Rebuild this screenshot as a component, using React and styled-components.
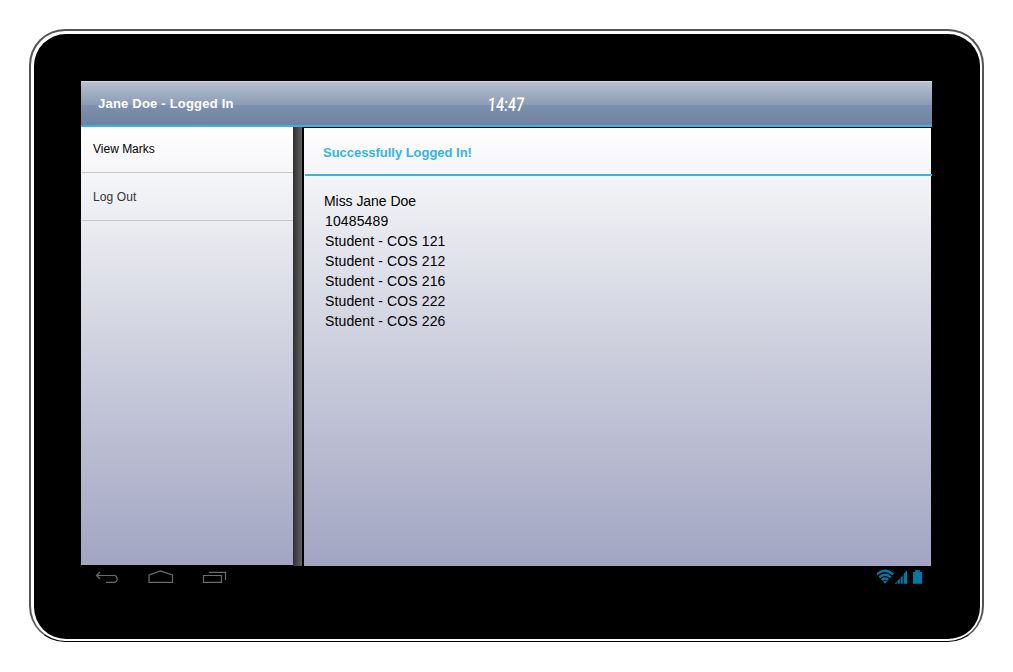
import React from "react";
import styled, { createGlobalStyle } from "styled-components";

const GlobalStyle = createGlobalStyle`
  * { box-sizing: border-box; }
  html, body { margin: 0; background: #fff; }
  body { font-family: "Liberation Sans", Arial, sans-serif; color: #000; overflow: hidden; }
`;

const Page = styled.div`
  width: 1013px;
  height: 672px;
  padding: 29px 29px 30px 29px;
`;

const Tablet = styled.div`
  width: 955px;
  height: 613px;
  padding: 3px 2px 2px 3px;
  border: 2px solid #555;
  border-bottom: 1px solid #000;
  border-radius: 36px;
  background: #fff;
`;

const Bezel = styled.div`
  width: 946px;
  height: 605px;
  padding: 47px 47px 0 47px;
  border-radius: 32px;
  background: #000;
`;

const Screen = styled.div`
  width: 852px;
  display: flex;
  flex-direction: column;
`;

const Header = styled.header`
  display: grid;
  grid-template-columns: 1fr auto 1fr;
  align-items: center;
  width: 851px;
  height: 46px;
  padding: 0 16px 0 17px;
  border-top: 1px solid #d5dbe0;
  border-bottom: 2px solid #33b5e5;
  background: linear-gradient(#b5c0cf 0%, #8c9cb5 53%, #7b90af 54%, #71829f 100%);
`;

const UserStatus = styled.div`
  font-size: 13px;
  font-weight: bold;
  line-height: 16px;
  letter-spacing: 0.21px;
  color: #fff;
`;

const Clock = styled.time`
  width: 36px;
  font-family: Roboto, sans-serif;
  font-size: 19px;
  font-weight: 500;
  line-height: 20px;
  color: #fff;
  white-space: nowrap;
  transform: translate(-1px, 1px) scaleX(0.75) skewX(-5deg);
  transform-origin: left center;
`;

const Content = styled.div`
  display: flex;
  height: 439px;
`;

const Sidebar = styled.nav`
  width: 212px;
  height: 438px;
  background: linear-gradient(#ffffff 0%, #ebecf1 22%, #cfd1df 50%, #a1a5c2 100%);
`;

const NavItem = styled.a`
  display: block;
  height: ${(p) => (p.$active ? "46px" : "48px")};
  padding: ${(p) => (p.$active ? "14px" : "16px")} 12px 0;
  border-bottom: 1px solid #c6c7cb;
  font-size: 12px;
  line-height: 16px;
  letter-spacing: ${(p) => (p.$active ? "0" : "0.12px")};
  color: ${(p) => (p.$active ? "#000" : "#333")};
`;

const Divider = styled.div`
  width: 9px;
  background: linear-gradient(90deg, #303030, #626262);
`;

const Main = styled.main`
  width: 627px;
  height: 438px;
  margin: 1px 0 0 2px;
  background: linear-gradient(#ffffff 0%, #ebecf1 20%, #cfd1df 48%, #a1a5c2 100%);
`;

const Title = styled.h1`
  width: 627px;
  height: 48px;
  margin: 0 0 0 1px;
  padding: 17px 18px 0;
  border-bottom: 2px solid #33b5e5;
  font-size: 13px;
  line-height: 16px;
  letter-spacing: -0.03px;
  color: #33b5e5;
`;

const Details = styled.ul`
  margin: 0;
  padding: 15px 0 0 21px;
  list-style: none;
  font-size: 14px;
  line-height: 20px;
`;

const Detail = styled.li`
  height: 20px;
  letter-spacing: 0.13px;

  &:first-child {
    margin-left: -1px;
    letter-spacing: -0.05px;
  }
`;

const SystemBar = styled.footer`
  display: flex;
  justify-content: space-between;
  height: 30px;
  padding: 3px 9px 0 14px;
`;

const NavButtons = styled.svg`
  width: 132px;
  height: 16px;
`;

const StatusIcons = styled.svg`
  width: 47px;
  height: 16px;
`;

const courses = ["COS 121", "COS 212", "COS 216", "COS 222", "COS 226"];

export default function App() {
  return (
    <>
      <GlobalStyle />
      <Page>
        <Tablet>
          <Bezel>
            <Screen>
              <Header>
                <UserStatus>Jane Doe - Logged In</UserStatus>
                <Clock>14:47</Clock>
              </Header>
              <Content>
                <Sidebar>
                  <NavItem $active>View Marks</NavItem>
                  <NavItem>Log Out</NavItem>
                </Sidebar>
                <Divider />
                <Main>
                  <Title>Successfully Logged In!</Title>
                  <Details>
                    <Detail>Miss Jane Doe</Detail>
                    <Detail>10485489</Detail>
                    {courses.map((c) => (
                      <Detail key={c}>Student - {c}</Detail>
                    ))}
                  </Details>
                </Main>
              </Content>
              <SystemBar>
                <NavButtons viewBox="0 0 132 16" fill="none" stroke="#6b6b6b" strokeWidth="1.2">
                  <path d="M5 3 L1.5 6.5 L5 10 M1.5 6.5 H18.5 A3 3 0 0 1 22 9.5 A3 3 0 0 1 18.5 13.3 H11" />
                  <path d="M54 13.3 V6 L65.5 2 L77.5 6 V13.3 Z" />
                  <path d="M108.5 6.5 H126.5 V13.3 H108.5 Z M114 3.3 H130.5 V11" />
                </NavButtons>
                <StatusIcons viewBox="1 0 47 16" fill="#0079a6">
                  <g fill="none" stroke="#0079a6" strokeWidth="2.4">
                    <path d="M0.8 5.4 Q9 -1.8 17.2 5.4" />
                    <path d="M3.3 8.3 Q9 3.2 14.7 8.3" />
                    <path d="M5.8 11.1 Q9 8 12.2 11.1" />
                  </g>
                  <path d="M7 12.6 Q9 11 11 12.6 L9 14.7 Z" />
                  <path d="M18.5 14.7 L20.8 12.4 V14.7 Z M21.5 11.8 L23.8 9.5 V14.7 H21.5 Z M24.6 8.8 L26.8 6.2 V14.7 H24.6 Z M27.7 5 L31 1.2 V14.7 H27.7 Z" />
                  <path d="M37 3 H39.2 V1 H43.8 V3 H46 V14.7 H37 Z" />
                </StatusIcons>
              </SystemBar>
            </Screen>
          </Bezel>
        </Tablet>
      </Page>
    </>
  );
}
